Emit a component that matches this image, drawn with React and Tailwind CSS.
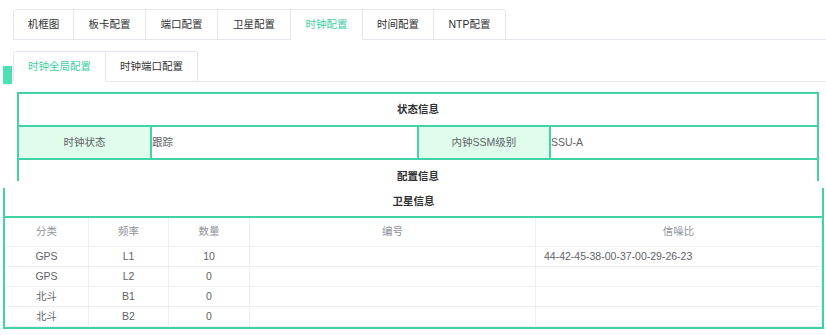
import React from "react";

const F = { fontFamily: '"Liberation Sans", "Noto Sans CJK SC", sans-serif' };

const topTabs = [
  { t: "机框图", w: "w-[60px]" },
  { t: "板卡配置", w: "w-[72px]" },
  { t: "端口配置", w: "w-[72px]" },
  { t: "卫星配置", w: "w-[73px]" },
  { t: "时钟配置", w: "w-[72px]", active: true },
  { t: "时间配置", w: "w-[71px]" },
  { t: "NTP配置", w: "w-[72px]" },
];

const subTabs = [
  { t: "时钟全局配置", w: "w-[92px]", active: true },
  { t: "时钟端口配置", w: "w-[92px]" },
];

function TabBar({ tabs, className }) {
  return (
    <div className={"flex items-end border-b border-[#e4e7ed] ml-[13px] " + className}>
      <div className="flex border-l border-[#e4e7ed] rounded-t-[3px]">
        {tabs.map((tab, i) => (
          <div
            key={i}
            className={
              "h-[31px] -mb-px flex items-center justify-center border-t border-r border-[#e4e7ed] text-[10.5px] " +
              tab.w +
              (tab.active
                ? " border-b border-b-white text-[#3ccf9f]"
                : " border-b border-b-[#e4e7ed] text-[#303133]") +
              (i === 0 ? " rounded-tl-[3px]" : "") +
              (i === tabs.length - 1 ? " rounded-tr-[3px]" : "")
            }
          >
            {tab.t}
          </div>
        ))}
      </div>
    </div>
  );
}

const rows = [
  ["GPS", "L1", "10", "", "44-42-45-38-00-37-00-29-26-23"],
  ["GPS", "L2", "0", "", ""],
  ["北斗", "B1", "0", "", ""],
  ["北斗", "B2", "0", "", ""],
];

export default function App() {
  return (
    <div className="relative w-[826px] h-[335px] overflow-hidden bg-white" style={F}>
      <div className="pt-[9px]">
        <TabBar tabs={topTabs} />
        <TabBar tabs={subTabs} className="mt-[11px]" />
      </div>
      <div className="absolute left-[3px] top-[66px] w-[9px] h-[18px] bg-[#4fdfb5]" />

      {/* Panel 1 */}
      <div className="mt-[10px] ml-[17px] w-[802px] h-[89px] overflow-hidden">
        <div className="border-2 border-[#41d3a6]">
          <div className="h-[33px] border-b-2 border-[#41d3a6] flex items-center justify-center text-[10.5px] font-bold text-[#303133]">
            状态信息
          </div>
          <div className="flex h-[33px] border-b-2 border-[#41d3a6] text-[10.5px] text-[#606266]">
            <div className="w-[133px] border-r-2 border-[#41d3a6] bg-[#dffcec] flex items-center justify-center">
              时钟状态
            </div>
            <div className="w-[267px] border-r-2 border-[#41d3a6] flex items-center">跟踪</div>
            <div className="w-[132px] border-r-2 border-[#41d3a6] bg-[#dffcec] flex items-center justify-center">
              内钟SSM级别
            </div>
            <div className="flex-1 flex items-center">SSU-A</div>
          </div>
          <div className="h-[33px] flex items-center justify-center text-[10.5px] font-bold text-[#303133]">
            配置信息
          </div>
        </div>
      </div>

      {/* Panel 2 */}
      <div className="ml-[3px] w-[821px] bg-white pt-[7px]">
        <div className="border-x-2 border-b-2 border-[#41d3a6]">
          <div className="h-[30px] border-b-2 border-[#41d3a6] flex items-center justify-center text-[10.5px] font-bold text-[#303133]">
            卫星信息
          </div>
          <div className="text-[10.5px]">
            <div className="flex h-[29px] border-b border-[#ebeef5] text-[#909399]">
              <div className="w-[84px] border-r border-[#ebeef5] flex items-center justify-center">分类</div>
              <div className="w-[80px] border-r border-[#ebeef5] flex items-center justify-center">频率</div>
              <div className="w-[81px] border-r border-[#ebeef5] flex items-center justify-center">数量</div>
              <div className="w-[286px] border-r border-[#ebeef5] flex items-center justify-center">编号</div>
              <div className="flex-1 border-r border-[#ebeef5] flex items-center justify-center">信噪比</div>
            </div>
            {rows.map((r, i) => (
              <div key={i} className="flex h-[20px] border-b border-[#ebeef5] text-[#606266]">
                <div className="w-[84px] border-r border-[#ebeef5] flex items-center justify-center">{r[0]}</div>
                <div className="w-[80px] border-r border-[#ebeef5] flex items-center justify-center">{r[1]}</div>
                <div className="w-[81px] border-r border-[#ebeef5] flex items-center justify-center">{r[2]}</div>
                <div className="w-[286px] border-r border-[#ebeef5] flex items-center justify-center">{r[3]}</div>
                <div className="flex-1 border-r border-[#ebeef5] flex items-center pl-[8px]">{r[4]}</div>
              </div>
            ))}
          </div>
        </div>
      </div>
    </div>
  );
}
